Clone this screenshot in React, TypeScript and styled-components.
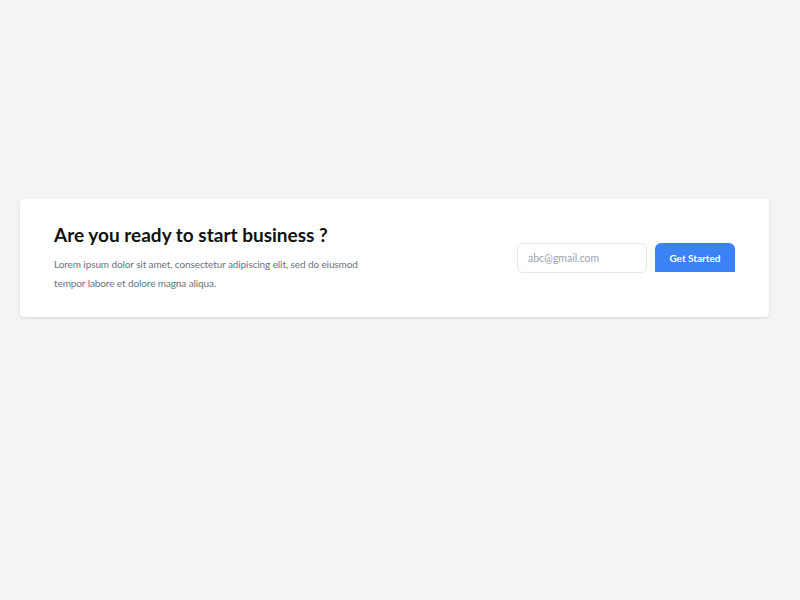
import React, { useState } from 'react';
import styled, { createGlobalStyle } from 'styled-components';

const GlobalStyle = createGlobalStyle`
  html, body {
    margin: 0;
    padding: 0;
    background: #f3f4f6;
    font-family: Lato, "Noto Sans", sans-serif;
  }
`;

const Page = styled.div`
  min-height: 600px;
  padding: 199px 31px 0 20px;
  box-sizing: border-box;
`;

const Card = styled.section`
  background: #ffffff;
  border-radius: 4px;
  box-shadow: 0 1px 3px rgba(0, 0, 0, 0.12);
  padding: 24px 34px 24px 34px;
  display: flex;
  align-items: flex-start;
  justify-content: space-between;
  box-sizing: border-box;
  height: 118px;
`;

const Copy = styled.div`
  display: flex;
  flex-direction: column;
`;

const Title = styled.h2`
  margin: 0;
  font-size: 19px;
  font-weight: 700;
  color: #111111;
  line-height: 24px;
`;

const Text = styled.p`
  margin: 8px 0 0 0;
  width: 320px;
  font-size: 10px;
  letter-spacing: -0.1px;
  line-height: 19px;
  color: #6b7280;
`;

const Form = styled.form`
  display: flex;
  gap: 8px;
  margin-top: 20px;
`;

const EmailInput = styled.input`
  width: 130px;
  height: 30px;
  box-sizing: border-box;
  padding: 0 10px;
  border: 1px solid #e5e7eb;
  border-radius: 6px;
  font-family: Lato, "Noto Sans", sans-serif;
  font-size: 10.5px;
  color: #374151;

  &::placeholder {
    color: #9ca3af;
  }

  &:focus {
    outline: none;
    border-color: #3b82f6;
  }
`;

const SubmitButton = styled.button`
  width: 80px;
  height: 29px;
  border: none;
  border-radius: 6px 6px 0 0;
  background: #3b82f6;
  color: #ffffff;
  font-family: Lato, "Noto Sans", sans-serif;
  font-size: 10px;
  font-weight: 700;
  cursor: pointer;
`;

const App: React.FC = () => {
    const [email, setEmail] = useState('');

    return (
        <>
            <GlobalStyle />
            <Page>
                <Card>
                    <Copy>
                        <Title>Are you ready to start business ?</Title>
                        <Text>
                            Lorem ipsum dolor sit amet, consectetur adipiscing elit, sed do eiusmod tempor labore et dolore magna aliqua.
                        </Text>
                    </Copy>
                    <Form onSubmit={(e) => e.preventDefault()}>
                        <EmailInput
                            type="email"
                            placeholder="abc@gmail.com"
                            value={email}
                            onChange={(e) => setEmail(e.target.value)}
                        />
                        <SubmitButton type="submit">Get Started</SubmitButton>
                    </Form>
                </Card>
            </Page>
        </>
    );
};

export default App;
